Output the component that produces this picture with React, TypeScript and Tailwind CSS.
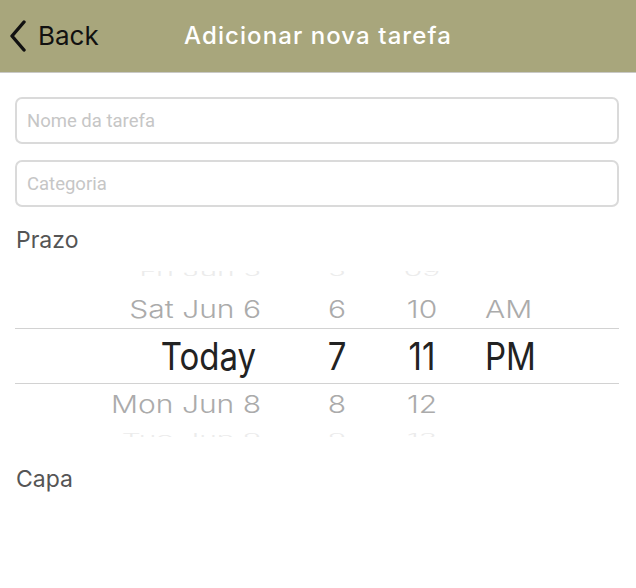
import React from "react";

const font = { fontFamily: "Inter, 'Noto Sans', sans-serif" };

type Row = { d: string; h: string; m: string; p: string };

// one wheel row of the iOS style date picker
function PickerRow({
  row,
  className,
  inner,
  dateW = "w-[246px]",
  hourMl = "ml-[36px]",
}: {
  row: Row;
  className: string;
  inner: string;
  dateW?: string;
  hourMl?: string;
}) {
  return (
    <div className={`flex items-center shrink-0 ${className}`}>
      <div className={`flex items-center leading-none ${inner}`}>
        <div className={`${dateW} text-right whitespace-nowrap`}>{row.d}</div>
        <div className={`${hourMl} w-[80px] text-center`}>{row.h}</div>
        <div className="ml-[5px] w-[80px] text-center">{row.m}</div>
        <div className="ml-[23px]">{row.p}</div>
      </div>
    </div>
  );
}

export default function App() {
  return (
    <div className="w-[636px] h-[588px] bg-white overflow-hidden" style={font}>
      <header className="relative h-[73px] bg-[#a8a67c] border-b border-[#c9c9c6] flex items-center">
        <button className="flex items-center pl-[10px] text-[#111] text-[26px] leading-none">
          <svg width="16" height="32" viewBox="0 0 16 32" className="mr-[12px]">
            <path d="M14 2 L2 16 L14 30" fill="none" stroke="#111" strokeWidth="3.4" strokeLinecap="round" strokeLinejoin="round" />
          </svg>
          Back
        </button>
        <h1 className="absolute left-0 right-0 text-center text-white text-[24px] font-medium tracking-[0.045em] leading-none pointer-events-none">
          Adicionar nova tarefa
        </h1>
      </header>

      <div className="pl-[15px] pr-[17px] pt-[24px]">
        <input
          placeholder="Nome da tarefa"
          className="w-full h-[47px] border-2 border-[#dadada] rounded-[7px] px-[10px] text-[18.5px] font-[Roboto] placeholder:text-[#c6c6c6] outline-none"
        />
        <input
          placeholder="Categoria"
          className="mt-[16px] w-full h-[47px] border-2 border-[#dadada] rounded-[7px] px-[10px] text-[18.5px] font-[Roboto] placeholder:text-[#c6c6c6] outline-none"
        />
        <div className="mt-[22px] pl-px text-[23px] leading-[23px] text-[#555]">Prazo</div>
      </div>

      <div className="mt-[19px] ml-[15px] mr-[17px] h-[166px] overflow-hidden flex flex-col">
        <PickerRow
          row={{ d: "Fri Jun 5", h: "5", m: "09", p: "" }}
          className="-mt-[19px] h-[38px]"
          inner="text-[30px] font-light text-[#ececec] scale-y-[0.45]"
        />
        <PickerRow
          row={{ d: "Sat Jun 6", h: "6", m: "10", p: "AM" }}
          className="h-[38px]"
          inner="text-[30px] font-light text-[#ababab] scale-y-[0.8]"
        />
        <PickerRow
          row={{ d: "Today", h: "7", m: "11", p: "PM" }}
          className="h-[56px] border-y border-[#d2d2d2]"
          inner="text-[33px] text-[#222] scale-y-[1.15]"
          dateW="w-[241px]"
          hourMl="ml-[41px]"
        />
        <PickerRow
          row={{ d: "Mon Jun 8", h: "8", m: "12", p: "" }}
          className="h-[40px]"
          inner="text-[30px] font-light text-[#ababab] scale-y-[0.8]"
        />
        <PickerRow
          row={{ d: "Tue Jun 9", h: "9", m: "13", p: "" }}
          className="h-[28px]"
          inner="text-[30px] font-light text-[#ececec] scale-y-[0.45]"
        />
      </div>

      <div className="px-[16px] mt-[31px] text-[23px] leading-[23px] text-[#555]">Capa</div>
    </div>
  );
}
